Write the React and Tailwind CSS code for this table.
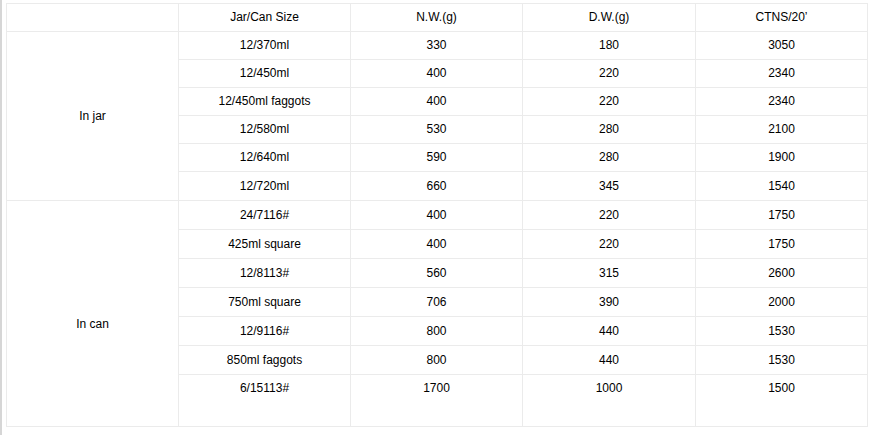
import React from 'react'

const jar = [
    ['12/370ml', '330', '180', '3050'],
    ['12/450ml', '400', '220', '2340'],
    ['12/450ml faggots', '400', '220', '2340'],
    ['12/580ml', '530', '280', '2100'],
    ['12/640ml', '590', '280', '1900'],
    ['12/720ml', '660', '345', '1540'],
]

const can = [
    ['24/7116#', '400', '220', '1750'],
    ['425ml square', '400', '220', '1750'],
    ['12/8113#', '560', '315', '2600'],
    ['750ml square', '706', '390', '2000'],
    ['12/9116#', '800', '440', '1530'],
    ['850ml faggots', '800', '440', '1530'],
    ['6/15113#', '1700', '1000', '1500'],
]

const cell = 'border border-[#ebebeb] text-center align-middle p-0 pb-[1px] leading-[16px]'

export default function App() {
    return (
        <div
            className="min-h-screen bg-white border-l-2 border-[#d6d6d6] pl-[4px] pt-[3px] text-[12px] text-black"
            style={{ fontFamily: '"Liberation Sans", Arial, sans-serif' }}
        >
            <table className="table-fixed border-collapse w-[861px]">
                <colgroup>
                    <col className="w-[172px]" />
                    <col className="w-[172px]" />
                    <col className="w-[172px]" />
                    <col className="w-[173px]" />
                    <col className="w-[172px]" />
                </colgroup>
                <tbody>
                    <tr className="h-[28px]">
                        <td className={cell}></td>
                        <td className={cell}>Jar/Can Size</td>
                        <td className={cell}>N.W.(g)</td>
                        <td className={cell}>D.W.(g)</td>
                        <td className={cell}>CTNS/20’</td>
                    </tr>
                    {jar.map((r, i) => (
                        <tr key={r[0]} className={i === jar.length - 1 ? 'h-[29px]' : 'h-[28px]'}>
                            {i === 0 && (
                                <td rowSpan={jar.length} className={cell}>
                                    In jar
                                </td>
                            )}
                            {r.map((v, j) => (
                                <td key={j} className={cell}>{v}</td>
                            ))}
                        </tr>
                    ))}
                    {can.map((r, i) => {
                        const last = i === can.length - 1
                        return (
                            <tr key={r[0]} className={last ? 'h-[52px]' : 'h-[29px]'}>
                                {i === 0 && (
                                    <td rowSpan={can.length} className={cell + ' pt-[21px]'}>
                                        In can
                                    </td>
                                )}
                                {r.map((v, j) => (
                                    <td key={j} className={last ? cell + ' !align-top pt-[5px]' : cell}>{v}</td>
                                ))}
                            </tr>
                        )
                    })}
                </tbody>
            </table>
        </div>
    )
}
